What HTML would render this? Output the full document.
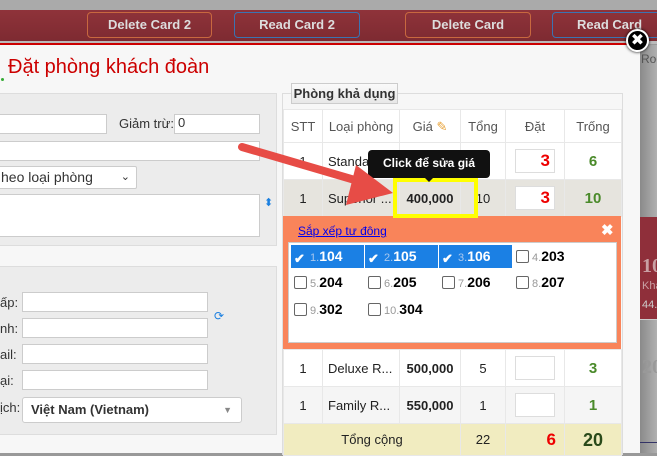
<!DOCTYPE html>
<html><head><meta charset="utf-8"><style>
*{box-sizing:border-box;margin:0;padding:0}
body{width:657px;height:453px;overflow:hidden;position:relative;font-family:"Liberation Sans",Arial,sans-serif;font-size:13px;color:#333;background:#999}
.a{position:absolute}
.btn{position:absolute;top:12px;height:26px;border:1.5px solid;border-radius:4px;color:#ddd;font-size:13px;font-weight:bold;text-align:center;line-height:23px}
.inp{position:absolute;background:#fff;border:1px solid #ccc;height:20px}
.lbl{position:absolute;font-size:13px;color:#333}
td{border:1px solid #e8e8e8;text-align:center;font-size:13px;padding:0;line-height:1;vertical-align:middle}
table{border-collapse:collapse;position:absolute;left:283px;width:338px;table-layout:fixed}
.ib{width:40px;height:24px;border:1px solid #ddd;background:#fff;margin:0 auto;text-align:right;padding-right:4px;color:#e00;font-size:17px;font-weight:bold;line-height:22px}
.cb{position:absolute;width:73px;height:23px;font-size:14px;font-weight:bold;color:#000;line-height:23px;padding-left:3px}
.cb .b{display:inline-block;width:13px;height:13px;border:1px solid #666;border-radius:2px;background:#fff;vertical-align:-2px;margin-right:3px}
.cb small{font-weight:normal;font-size:11px;color:#999}
.cb.s{background:#1b80e4;color:#fff}
.cb.s .b{border:none;background:#1b80e4;color:#fff;font-size:13px;line-height:13px}
.cb.s small{color:#aac8ee}
</style></head><body>
<div class="a" style="left:0;top:0;width:657px;height:10px;background:#aaa"></div>
<div class="a" style="left:0;top:10px;width:657px;height:32px;background:linear-gradient(#8f333a,#7d2a31)"></div>
<div class="a" style="left:0;top:41px;width:657px;height:3px;background:#bbb"></div>
<div class="a" style="left:0;top:43px;width:640px;height:2px;background:#c00"></div>
<div class="btn" style="left:87px;width:125px;border-color:#c8683f">Delete Card 2</div>
<div class="btn" style="left:234px;width:126px;border-color:#3b73b2">Read Card 2</div>
<div class="btn" style="left:405px;width:126px;border-color:#c8683f">Delete Card</div>
<div class="btn" style="left:552px;width:115px;border-color:#3b73b2">Read Card</div>
<!-- right strip -->
<div class="a" style="left:640px;top:45px;width:17px;height:408px;background:linear-gradient(90deg,#8a8a8a,#b0b0b0)"></div>
<div class="a" style="left:641px;top:52px;font-size:12px;color:#555">Roo</div>
<div class="a" style="left:640px;top:217px;width:17px;height:103px;background:#8f2f3a"></div>
<div class="a" style="left:642px;top:255px;font:bold 20px 'Liberation Serif',serif;color:#c9a0a4">10</div>
<div class="a" style="left:642px;top:280px;font-size:11px;color:#c9a0a4">Khác</div>
<div class="a" style="left:642px;top:299px;font-size:11px;color:#ccc">44.5</div>
<div class="a" style="left:640px;top:319px;width:17px;height:1px;background:#ccc"></div>
<div class="a" style="left:642px;top:356px;font:bold 20px 'Liberation Serif',serif;color:#999">20</div>
<div class="a" style="left:640px;top:442px;width:17px;height:1px;background:#336"></div>
<!-- modal -->
<div class="a" style="left:0;top:45px;width:640px;height:408px;background:#f7f7f7"></div>
<div class="a" style="left:626px;top:29px;width:23px;height:23px;border-radius:50%;background:#000;border:2px solid #fff;box-shadow:0 0 3px #000;color:#fff;font:bold 16px/18px 'DejaVu Sans',sans-serif;text-align:center">✖</div>
<div class="a" style="left:1px;top:78px;width:3px;height:3px;border-radius:50%;background:#3a3"></div>
<div class="a" style="left:8px;top:56px;font-size:20px;color:#c00">Đặt phòng khách đoàn</div>
<!-- left panel 1 -->
<div class="a" style="left:-2px;top:93px;width:279px;height:153px;border:1px solid #ddd;background:#ececec"></div>
<div class="inp" style="left:-2px;top:114px;width:109px"></div>
<div class="lbl" style="left:119px;top:116px">Giảm trừ:</div>
<div class="inp" style="left:174px;top:114px;width:86px;padding-left:3px;font-size:13px">0</div>
<div class="inp" style="left:-2px;top:141px;width:262px"></div>
<div class="inp" style="left:-2px;top:166px;width:139px;height:23px;border-radius:2px;padding-left:2px;font-size:14px;line-height:21px">heo loại phòng<span style="position:absolute;right:6px;top:0;font-size:11px">⌄</span></div>
<div class="inp" style="left:-2px;top:194px;width:262px;height:43px"></div>
<div class="a" style="left:264px;top:196px;color:#1a7fe0;font-size:11px">⬍</div>
<!-- left panel 2 -->
<div class="a" style="left:-2px;top:266px;width:279px;height:169px;border:1px solid #ddd;background:#ececec"></div>
<div class="lbl" style="left:0;top:295px">ấp:</div>
<div class="lbl" style="left:0;top:321px">nh:</div>
<div class="lbl" style="left:0;top:347px">ail:</div>
<div class="lbl" style="left:0;top:373px">ại:</div>
<div class="lbl" style="left:0;top:400px">ịch:</div>
<div class="inp" style="left:22px;top:292px;width:186px"></div>
<div class="inp" style="left:22px;top:318px;width:186px"></div>
<div class="inp" style="left:22px;top:344px;width:186px"></div>
<div class="inp" style="left:22px;top:370px;width:186px"></div>
<div class="inp" style="left:22px;top:397px;width:220px;height:26px;border-radius:3px;padding-left:8px;font-size:13px;font-weight:bold;line-height:24px;color:#333">Việt Nam (Vietnam)<span style="position:absolute;right:9px;top:0;font-size:9px;color:#888">▼</span></div>
<div class="a" style="left:214px;top:309px;color:#1a7fe0;font-size:12px">⟳</div>
<!-- right panel -->
<div class="a" style="left:282px;top:93px;width:341px;height:362px;border:1px solid #ddd;background:#f7f7f7"></div>
<div class="a" style="left:291px;top:83px;width:107px;height:21px;border:1px solid #ccc;background:linear-gradient(#fafafa,#e8e8e8);font-size:13px;font-weight:bold;text-align:center;line-height:19px">Phòng khả dụng</div>
<table style="top:109px;color:#555">
<colgroup><col style="width:39px"><col style="width:77px"><col style="width:61px"><col style="width:45px"><col style="width:59px"><col style="width:57px"></colgroup>
<tr style="height:33px;background:#fff"><td>STT</td><td>Loại phòng</td><td>Giá <span style="color:#e8a33a">✎</span></td><td>Tổng</td><td>Đặt</td><td>Trống</td></tr>
<tr style="height:37px;background:#fff;color:#222"><td>1</td><td style="text-align:left;padding-left:5px">Standard</td><td style="font-weight:bold">500,000</td><td>6</td><td><div class="ib">3</div></td><td style="color:#4a8a2a;font-weight:bold;font-size:15px">6</td></tr>
<tr style="height:37px;background:#e6e4de;color:#222"><td>1</td><td style="text-align:left;padding-left:5px">Superior ...</td><td style="font-weight:bold">400,000</td><td>10</td><td><div class="ib">3</div></td><td style="color:#4a8a2a;font-weight:bold;font-size:15px">10</td></tr>
</table>
<table style="top:349px;color:#222">
<colgroup><col style="width:39px"><col style="width:77px"><col style="width:61px"><col style="width:45px"><col style="width:59px"><col style="width:57px"></colgroup>
<tr style="height:37px;background:#fff"><td>1</td><td style="text-align:left;padding-left:5px">Deluxe R...</td><td style="font-weight:bold">500,000</td><td>5</td><td><div class="ib"></div></td><td style="color:#4a8a2a;font-weight:bold;font-size:15px">3</td></tr>
<tr style="height:37px;background:#f5f5f5"><td>1</td><td style="text-align:left;padding-left:5px">Family R...</td><td style="font-weight:bold">550,000</td><td>1</td><td><div class="ib"></div></td><td style="color:#4a8a2a;font-weight:bold;font-size:15px">1</td></tr>
<tr style="height:32px;background:#f1ecc0"><td colspan="3">Tổng cộng</td><td>22</td><td style="text-align:right;padding-right:8px;color:#e00;font-weight:bold;font-size:17px">6</td><td style="color:#2a4a1a;font-weight:bold;font-size:18px">20</td></tr>
</table>
<!-- orange popup -->
<div class="a" style="left:283px;top:216px;width:338px;height:133px;background:#f9845a"></div>
<div class="a" style="left:298px;top:224px;color:#00e;text-decoration:underline;font-size:12px">Sắp xếp tư đông</div>
<div class="a" style="left:601px;top:221px;color:#fff;font-size:15px;font-weight:bold">✖</div>
<div class="a" style="left:288px;top:242px;width:329px;height:101px;background:#fff;border:1px solid #ccc"></div>
<div class="cb s" style="left:291px;top:245px"><span class="b">✔</span><small>1.</small>104</div>
<div class="cb s" style="left:365px;top:245px"><span class="b">✔</span><small>2.</small>105</div>
<div class="cb s" style="left:439px;top:245px"><span class="b">✔</span><small>3.</small>106</div>
<div class="cb" style="left:513px;top:245px"><span class="b"></span><small>4.</small>203</div>
<div class="cb" style="left:291px;top:271px"><span class="b"></span><small>5.</small>204</div>
<div class="cb" style="left:365px;top:271px"><span class="b"></span><small>6.</small>205</div>
<div class="cb" style="left:439px;top:271px"><span class="b"></span><small>7.</small>206</div>
<div class="cb" style="left:513px;top:271px"><span class="b"></span><small>8.</small>207</div>
<div class="cb" style="left:291px;top:298px"><span class="b"></span><small>9.</small>302</div>
<div class="cb" style="left:365px;top:298px"><span class="b"></span><small>10.</small>304</div>
<!-- yellow highlight -->
<div class="a" style="left:393px;top:178px;width:85px;height:40px;border:4px solid #ff0"></div>
<!-- tooltip -->
<div class="a" style="left:368px;top:150px;width:122px;height:28px;background:#111;border-radius:4px;color:#fff;font-size:12px;font-weight:bold;text-align:center;line-height:26px">Click để sửa giá</div>
<div class="a" style="left:424px;top:177px;width:0;height:0;border:5px solid transparent;border-top-color:#111"></div>
<!-- arrow -->
<svg class="a" style="left:230px;top:135px" width="170" height="75"><line x1="12" y1="12" x2="135" y2="48" stroke="#e74c46" stroke-width="8" stroke-linecap="round"/><polygon points="163,58 126,30 116,70" fill="#e74c46"/></svg>
</body></html>
